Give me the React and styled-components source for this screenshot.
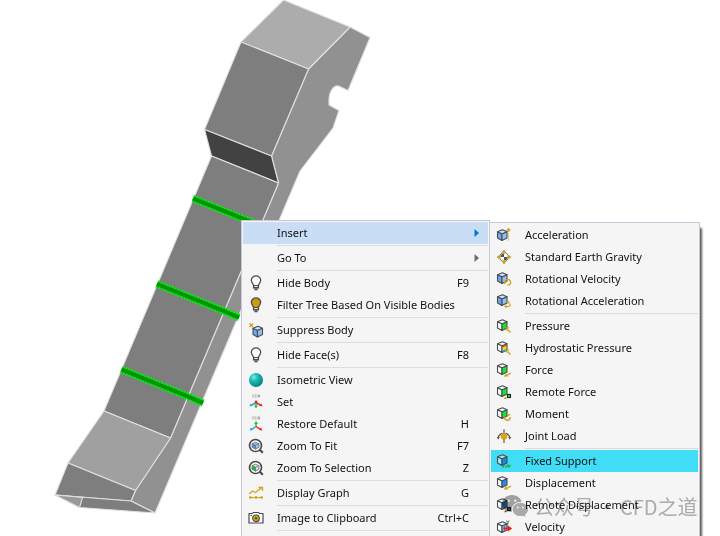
import React from 'react'
import styled, {createGlobalStyle} from 'styled-components'

const INSERT_ITEMS = [
  {text: 'Acceleration', icon: 'acceleration'},
  {text: 'Standard Earth Gravity', icon: 'gravity'},
  {text: 'Rotational Velocity', icon: 'rotVelocity'},
  {text: 'Rotational Acceleration', icon: 'rotAcceleration', divider: true},
  {text: 'Pressure', icon: 'pressure'},
  {text: 'Hydrostatic Pressure', icon: 'hydrostatic'},
  {text: 'Force', icon: 'force'},
  {text: 'Remote Force', icon: 'remoteForce'},
  {text: 'Moment', icon: 'moment'},
  {text: 'Joint Load', icon: 'joint', divider: true},
  {text: 'Fixed Support', icon: 'fixed', active: true},
  {text: 'Displacement', icon: 'displacement'},
  {text: 'Remote Displacement', icon: 'remoteDisplacement'},
  {text: 'Velocity', icon: 'velocity'},
]

const MAIN_ITEMS = [
  {text: 'Insert', arrow: true, active: true, divider: true},
  {text: 'Go To', arrow: true, divider: true},
  {text: 'Hide Body', icon: 'bulb', shortcut: 'F9'},
  {text: 'Filter Tree Based On Visible Bodies', icon: 'bulbOn', divider: true},
  {text: 'Suppress Body', icon: 'suppress', divider: true},
  {text: 'Hide Face(s)', icon: 'bulb', shortcut: 'F8', divider: true},
  {text: 'Isometric View', icon: 'sphere'},
  {text: 'Set', icon: 'isoSet'},
  {text: 'Restore Default', icon: 'isoRestore', shortcut: 'H'},
  {text: 'Zoom To Fit', icon: 'zoomFit', shortcut: 'F7'},
  {text: 'Zoom To Selection', icon: 'zoomSelection', shortcut: 'Z', divider: true},
  {text: 'Display Graph', icon: 'graph', shortcut: 'G', divider: true},
  {text: 'Image to Clipboard', icon: 'camera', shortcut: 'Ctrl+C', divider: true},
]

export default function App() {
  return (
    <>
      <GlobalStyle/>
      <Viewport>
        <Model/>
        <MainMenu role='menu' aria-label='Context menu'>
          {MAIN_ITEMS.map((item) => <Item key={item.text} {...item} activeColor='#c9ddf5'/>)}
        </MainMenu>
        <SubMenu role='menu' aria-label='Insert'>
          {INSERT_ITEMS.map((item) => <Item key={item.text} {...item} activeColor='#41dcf6'/>)}
        </SubMenu>
        <Watermark>
          <WeChatLogo/>
          <WatermarkText>
            <span>公众号</span>
            <span>·</span>
            <span>CFD之道</span>
          </WatermarkText>
        </Watermark>
      </Viewport>
    </>
  )
}

function Item({text, icon, shortcut, arrow, active, divider, activeColor}) {
  return (
    <>
      <ItemButton type='button' role='menuitem' $bg={active ? activeColor : 'transparent'}>
        <IconBox viewBox='0 0 16 16' aria-hidden='true'>{icon && ICONS[icon]}</IconBox>
        <Label>{text}</Label>
        {shortcut && <Shortcut>{shortcut}</Shortcut>}
        <ArrowBox viewBox='0 0 10 10' aria-hidden='true'>
          {arrow && <path d='M5.500 1v8l4.500-4z' fill={active ? '#0078d7' : '#6e6e70'}/>}
        </ArrowBox>
      </ItemButton>
      {divider && <Divider/>}
    </>
  )
}

// front, right and top faces of the small body used by most load icons
function Cube({front = '#fafafa', right = '#fafafa', top = '#fafafa'}) {
  return (
    <g stroke='#4a4e52' strokeWidth='1.100' strokeLinejoin='round'>
      <path d='M1.500 3.800L6 5.800V12.500L1.500 10z' fill={front}/>
      <path d='M6 5.800L11 3.800V10L6 12.500z' fill={right}/>
      <path d='M1.500 3.800L6.500 1.700L11 3.800L6 5.800z' fill={top}/>
    </g>
  )
}

const BLUE = {front: '#6ea6e8', right: '#8fc0f5', top: '#d4e6fa'}

function Bulb({fill}) {
  return (
    <g fill='none' stroke='#4a4a4a' strokeWidth='1.200'>
      <path d='M5.600 10.500C5.600 8.800 3.300 8 3.300 5.300A4.700 4.400 0 0 1 12.700 5.300C12.700 8 10.400 8.800 10.400 10.500z' fill={fill}/>
      <path d='M5.600 10.500v2.300h4.800v-2.300M6.500 14.500h3' strokeWidth='1.400'/>
    </g>
  )
}

function Magnifier({color, light}) {
  return (
    <g>
      <circle cx='7.500' cy='7.500' r='6' fill='#fff' stroke='#4a4a4a' strokeWidth='1.700'/>
      <path d='M11.500 11.500l3.300 3.300' stroke='#4a4a4a' strokeWidth='2.200'/>
      <path d='M4 5.700L7.500 4.200L11 5.700V9.200L7.500 11.200L4 9.200z' fill={light} stroke='#666' strokeWidth='.8'/>
      <path d='M4 5.700L7.500 7.200V11.200L4 9.200z' fill={color}/>
      <path d='M7.500 7.200V11M4 5.700L7.500 7.200L11 5.700' fill='none' stroke='#666' strokeWidth='.7'/>
    </g>
  )
}

// grey marks above the small axes
function IsoMarks() {
  return <path d='M5 .5v3M6.500 1h2M6.500 3h2M10 1h1.500v2H10z' fill='none' stroke='#9a9a9a' strokeWidth='.9'/>
}

function GoldArrowIn() {
  return (
    <g stroke={gold} fill={gold}>
      <path d='M14.500 14.500l-3-3' strokeWidth='1.300'/>
      <path d='M10 9.500h3.200l-3.200 3.200z' strokeWidth='.3'/>
    </g>
  )
}

function GoldArrowOut() {
  return (
    <g stroke={gold} fill={gold}>
      <path d='M15 11l-4 2.300' strokeWidth='1.300'/>
      <path d='M8 14.500l2-3.200 1.800 3z' strokeWidth='.3'/>
    </g>
  )
}

const gold = '#d3a11d'

const ICONS = {
  bulb: <Bulb fill='#fbfbfb'/>,
  bulbOn: <Bulb fill='#cf9a10'/>,
  suppress: (
    <g>
      <g transform='translate(3.500 2.500)'><Cube {...BLUE}/></g>
      <path d='M1.500 1.500l3.500 3.500M5 1.500L1.500 5' stroke={gold} strokeWidth='1.500'/>
    </g>
  ),
  sphere: (
    <g>
      <defs>
        <radialGradient id='sphere' cx='.35' cy='.3' r='.75'>
          <stop offset='0' stopColor='#7ff0ea'/>
          <stop offset='.35' stopColor='#1fbdb8'/>
          <stop offset='1' stopColor='#087d7c'/>
        </radialGradient>
      </defs>
      <circle cx='8' cy='8' r='7' fill='url(#sphere)'/>
    </g>
  ),
  isoSet: (
    <g fill='none' strokeWidth='1.500'>
      <IsoMarks/>
      <path d='M7.500 9L3.500 11' stroke='#29a3e8'/>
      <path d='M1.500 12.500l1-3 2.300 2.300z' fill='#29a3e8'/>
      <path d='M8 9v4' stroke='#20c933'/>
      <path d='M6 11.500h4l-2 3z' fill='#20c933'/>
      <path d='M8.500 9L12.500 11' stroke='#e02828'/>
      <path d='M14.500 12.500l-1-3-2.300 2.300z' fill='#e02828'/>
      <circle cx='8' cy='8' r='1.400' fill='#e02828'/>
    </g>
  ),
  isoRestore: (
    <g fill='none' strokeWidth='1.500'>
      <IsoMarks/>
      <path d='M8 10.500V6' stroke='#20c933'/>
      <path d='M6 8h4L8 5z' fill='#20c933'/>
      <path d='M8 10.500l-4.500 3' stroke='#29a3e8'/>
      <path d='M1.500 14.500l1.500-3 2 2.500z' fill='#29a3e8'/>
      <path d='M8 10.500l4.500 3' stroke='#e02828'/>
      <path d='M14.500 14.500L13 11.500l-2 2.500z' fill='#e02828'/>
    </g>
  ),
  zoomFit: <Magnifier color='#5b8fd0' light='#9cc6f2'/>,
  zoomSelection: <Magnifier color='#12c22c' light='#c8dff5'/>,
  graph: (
    <g fill='none' stroke={gold} strokeWidth='1.300'>
      <path d='M1 9l3.500-3 3 1.500L14 2.500M10.500 2.500H14.500V6'/>
      <path d='M1 12.500h14' strokeWidth='1'/>
      <path d='M1.500 12.500h2M7 12.500h2M12.500 12.500h2' strokeWidth='2.400'/>
    </g>
  ),
  camera: (
    <g>
      <path d='M1 3.500h3.500l.8-1h5.400l.8 1H15v9.500H1z' fill='#fafafa' stroke='#4a4a4a' strokeWidth='1.200' strokeLinejoin='round'/>
      <circle cx='8' cy='8.300' r='3.300' fill='#d9a927' stroke='#4a4a4a' strokeWidth='1.200'/>
      <circle cx='8' cy='8.300' r='1.200' fill='#5a4c20'/>
      <path d='M2.500 5.500h1.500' stroke='#4a4a4a'/>
    </g>
  ),
  acceleration: (
    <g>
      <g transform='translate(0 1)'><Cube {...BLUE}/></g>
      <path d='M12.500 1v4M10.500 3h4' stroke={gold} strokeWidth='1.400'/>
      <path d='M12.500 6.500v8' stroke={gold} strokeWidth='1' strokeDasharray='1 1'/>
    </g>
  ),
  gravity: (
    <g>
      <circle cx='8' cy='8' r='4.400' fill='#fff' stroke='#777' strokeWidth='1'/>
      <path d='M8 8V4.500A3.500 3.500 0 0 0 4.500 8zM8 8v3.500A3.500 3.500 0 0 0 11.500 8z' fill='#555'/>
      <path d='M8 1v4M8 15v-4M1 8h4M15 8h-4' stroke={gold} strokeWidth='1.200'/>
      <path d='M8 .8l2.500 2.900H5.500zM8 15.200l2.500-2.900H5.500zM.8 8l2.900-2.500v5zM15.200 8l-2.900-2.500v5z' fill={gold}/>
    </g>
  ),
  rotVelocity: (
    <g>
      <Cube {...BLUE}/>
      <path d='M9 12.200a2.900 2.900 0 1 1 2.500 2' fill='none' stroke={gold} strokeWidth='1.300'/>
      <path d='M7.200 10.500h3.600L8.700 13.500z' fill={gold}/>
    </g>
  ),
  rotAcceleration: (
    <g>
      <Cube {...BLUE}/>
      <path d='M12 7.500v3M10.500 9h3' stroke={gold} strokeWidth='1.100'/>
      <path d='M9.500 13.500h3.500a1.600 1.600 0 0 0 0-3' fill='none' stroke={gold} strokeWidth='1.200'/>
      <path d='M8 13.500l2.700-2v4z' fill={gold}/>
    </g>
  ),
  pressure: (
    <g>
      <Cube right='#10e830'/>
      <GoldArrowIn/>
    </g>
  ),
  hydrostatic: (
    <g>
      <Cube right='#f2e028'/>
      <path d='M6.600 6.800l3.900-1.600' stroke='#e8442c' strokeWidth='1.300'/>
      <path d='M6.600 11.200l3.900-1.900' stroke='#21b8ee' strokeWidth='1.300'/>
      <GoldArrowIn/>
    </g>
  ),
  force: (
    <g>
      <Cube right='#10e830'/>
      <GoldArrowOut/>
    </g>
  ),
  remoteForce: (
    <g>
      <Cube right='#10e830'/>
      <path d='M7.500 15l2-2.500 1.500 2.500z' fill={gold}/>
      <rect x='11.500' y='10.500' width='3' height='3' fill='#10e830' stroke='#222' strokeWidth='1.100'/>
    </g>
  ),
  moment: (
    <g>
      <Cube right='#10e830'/>
      <path d='M8.500 10.500c0 5 5.800 5 5.800 .5' fill='none' stroke={gold} strokeWidth='1.500'/>
      <path d='M11.500 11V8.200h3.500z' fill={gold}/>
    </g>
  ),
  joint: (
    <g>
      <path d='M2 10a6.200 6.200 0 0 1 12 0M8 1.500v3' fill='none' stroke='#4a4a4a' strokeWidth='1.200'/>
      <circle cx='8' cy='8.300' r='3.300' fill='#dba51a'/>
      <path d='M8 11v4' stroke='#8a6a18' strokeWidth='1.300'/>
      <path d='M.8 9h2.700l-1.200 2.500zM15.200 9h-2.700l1.200 2.500z' fill='#4a4a4a'/>
    </g>
  ),
  fixed: (
    <g>
      <Cube front='#9eeaf5' right='#1687e6' top='#9eeaf5'/>
      <path d='M6.500 14.500l2-2M9.500 14.500l3-3M12 14.500l2.500-2.500' stroke='#1fae35' strokeWidth='1.300'/>
    </g>
  ),
  displacement: (
    <g>
      <Cube right='#1f8df0'/>
      <GoldArrowOut/>
    </g>
  ),
  remoteDisplacement: (
    <g>
      <Cube right='#1f6fb8'/>
      <path d='M7.500 15l2-2.500 1.500 2.500z' fill={gold}/>
      <rect x='11.500' y='10.500' width='3' height='3' fill='#1f6fb8' stroke='#222' strokeWidth='1.100'/>
    </g>
  ),
  velocity: (
    <g>
      <g transform='translate(0 1)'><Cube right='#6fb6f5'/></g>
      <path d='M7.500 9.500H13' stroke='#f01818' strokeWidth='1.500'/>
      <path d='M8.500 7.500v4M12 7v5l3.500-2.500z' fill='#f01818' stroke='#f01818' strokeWidth='.9'/>
      <path d='M10.500 1.500l1.300 2 1.300-2M11.800 3.500v2' fill='none' stroke='#555' strokeWidth='.9'/>
    </g>
  ),
}

function Model() {
  return (
    <ModelSvg width='400' height='536' viewBox='0 0 400 536' aria-hidden='true'>
      <g stroke='#e0e0e0' strokeWidth='1.100' strokeLinejoin='round'>
        <path d='M350 27L370 37.500L348 90.500L338.500 86C333 85 329 93 329 99V105L339 110.500L333 128L300 171L155 513L131 501L135.500 490.500L170.500 438L278.500 183L271.500 156L308.500 69z' fill='#919191'/>
        <path d='M283.500 0L350 27L308.500 69L241 42z' fill='#acacac'/>
        <path d='M241 42L308.500 69L271.500 156L204.500 129.500z' fill='#7e7e7e'/>
        <path d='M204.500 129.500L271.500 156L278.500 183L211.500 156z' fill='#424242'/>
        <path d='M211.500 156L278.500 183L170.500 438L104 411z' fill='#7e7e7e'/>
        <path d='M104 411L170.500 438L135.500 490.500L68 463z' fill='#a0a0a0'/>
        <path d='M68 463L135.500 490.500L131 501L55 495z' fill='#7e7e7e'/>
        <path d='M55 495L131 501L155 513L79.500 507.500z' fill='#7e7e7e'/>
        <path d='M55 495L82.500 497.500L79.500 507.500z' fill='#989898'/>
      </g>
      <Weld d='M193 198.500L260 225.500L273 231.500'/>
      <Weld d='M157 284L225 311.500L239 317.500'/>
      <Weld d='M121.500 369.500L188 396.500L203 403'/>
    </ModelSvg>
  )
}

function Weld({d}) {
  return (
    <g fill='none'>
      <path d={d} stroke='#00c80a' strokeWidth='6'/>
      <path d={d} stroke='#08f018' strokeWidth='8' strokeDasharray='1.500 1.500'/>
      <path d={d} stroke='#009400' strokeWidth='4'/>
    </g>
  )
}

function WeChatLogo() {
  return (
    <LogoSvg viewBox='0 0 26 24' aria-hidden='true'>
      <path d='M10 1C4.500 1 0 4.800 0 9.500c0 2.600 1.400 4.900 3.600 6.400L2.700 19l3.500-1.800c1.200.4 2.300.5 3.800.5-.2-.6-.3-1.300-.3-2 0-4.600 4.400-8 9.700-8C18.800 4 14.800 1 10 1z' fill='#a6a6a6'/>
      <path d='M26 15.300c0-3.800-3.500-6.600-7.700-6.600s-7.600 3-7.600 6.700 3.400 6.700 7.600 6.700c1 0 1.900-.2 2.700-.4l2.600 1.300-.7-2.200c1.900-1.300 3.100-3.300 3.100-5.500z' fill='#b0b0b0'/>
      <g fill='#f5f5f5'>
        <circle cx='6.700' cy='6.800' r='1.200'/>
        <circle cx='13.200' cy='6.800' r='1.200'/>
        <circle cx='15.900' cy='13.500' r='1'/>
        <circle cx='20.900' cy='13.500' r='1'/>
      </g>
    </LogoSvg>
  )
}

const GlobalStyle = createGlobalStyle`
  body {
    margin: 0;
    background: #fff;
    font-family: "Noto Sans", "Noto Sans CJK SC", sans-serif;
    font-size: 11px;
    color: #111;
  }
`

const Viewport = styled.main`
  position: relative;
  height: 100vh;
  overflow: hidden;
`

const ModelSvg = styled.svg`
  display: block;
`

const Menu = styled.div`
  position: absolute;
  bottom: 0;
  box-sizing: border-box;
  padding: 1px;
  background: #f5f5f5;
  border: solid #c8c8da;
`

const MainMenu = styled(Menu)`
  top: 220px;
  left: 241px;
  width: 249px;
  border-width: 1px 1px 0 1px;
`

const SubMenu = styled(Menu)`
  top: 222px;
  left: 490px;
  width: 210px;
  border-width: 1px 1px 0 0;
  box-shadow: 3px 5px 2px -1px rgba(0, 0, 0, 0.65);
`

const ItemButton = styled.button`
  display: flex;
  align-items: center;
  width: 100%;
  height: 22px;
  padding: 0 9px 0 5px;
  border: none;
  background: ${({$bg}) => $bg};
  color: inherit;
  font: inherit;
  line-height: 16px;
  text-align: left;
  white-space: nowrap;
`

const IconBox = styled.svg`
  flex: none;
  width: 16px;
  height: 16px;
  margin-right: 13px;
`

const Label = styled.span`
  flex: 1;
`

const Shortcut = styled.span`
  flex: none;
`

const ArrowBox = styled.svg`
  flex: none;
  width: 10px;
  height: 10px;
`

const Divider = styled.hr`
  height: 1px;
  margin: 1px 0 1px 34px;
  border: none;
  background: #dcdce0;
`

const Watermark = styled.div`
  position: absolute;
  top: 493px;
  left: 502px;
  display: flex;
  align-items: center;
  gap: 6px;
  height: 26px;
  color: #b2b2b2;
  font-family: "Noto Sans CJK SC", sans-serif;
  font-size: 20px;
  white-space: nowrap;
  mix-blend-mode: multiply;
  pointer-events: none;
`

const WatermarkText = styled.div`
  display: flex;
  gap: 3px;
`

const LogoSvg = styled.svg`
  width: 26px;
  height: 24px;
`
